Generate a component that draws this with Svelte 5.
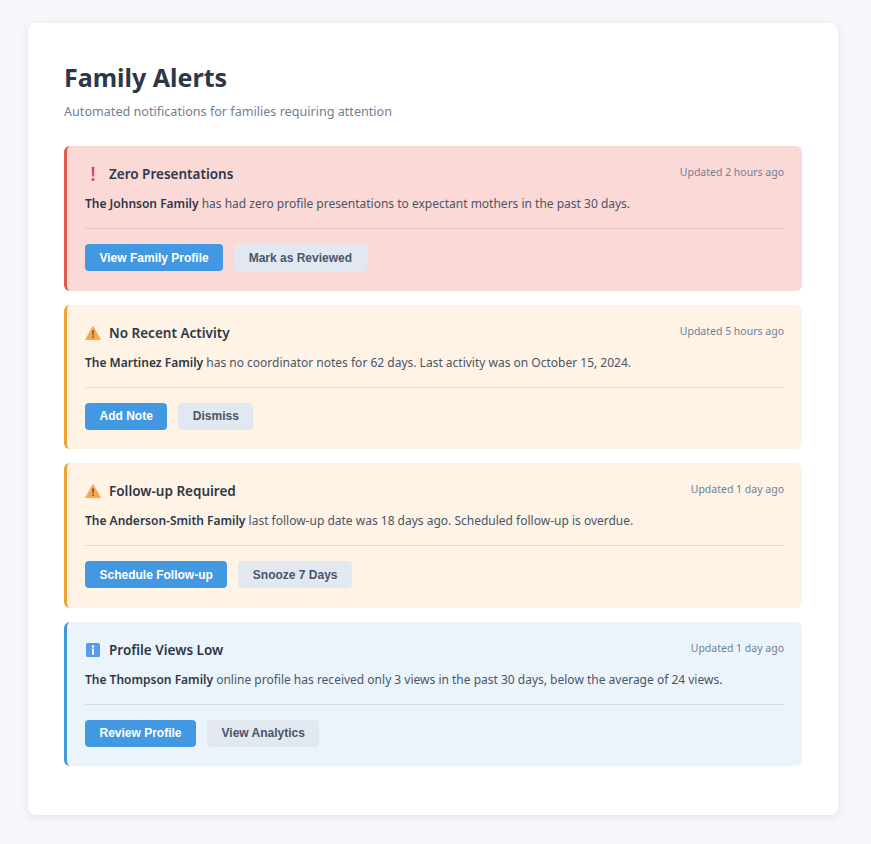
<script>
  const alerts = [
    { kind: 'critical', icon: 'bang', title: 'Zero Presentations', time: 'Updated 2 hours ago', family: 'The Johnson Family', text: ' has had zero profile presentations to expectant mothers in the past 30 days.', primary: 'View Family Profile', secondary: 'Mark as Reviewed' },
    { kind: 'warning', icon: 'warn', title: 'No Recent Activity', time: 'Updated 5 hours ago', family: 'The Martinez Family', text: ' has no coordinator notes for 62 days. Last activity was on October 15, 2024.', primary: 'Add Note', secondary: 'Dismiss' },
    { kind: 'warning', icon: 'warn', title: 'Follow-up Required', time: 'Updated 1 day ago', family: 'The Anderson-Smith Family', text: ' last follow-up date was 18 days ago. Scheduled follow-up is overdue.', primary: 'Schedule Follow-up', secondary: 'Snooze 7 Days' },
    { kind: 'info', icon: 'info', title: 'Profile Views Low', time: 'Updated 1 day ago', family: 'The Thompson Family', text: ' online profile has received only 3 views in the past 30 days, below the average of 24 views.', primary: 'Review Profile', secondary: 'View Analytics' }
  ];
</script>

<div class="page">
  <main class="card">
    <h1>Family Alerts</h1>
    <p class="sub">Automated notifications for families requiring attention</p>

    <div class="list">
      {#each alerts as a}
        <section class="alert {a.kind}">
          <div class="head">
            <div class="title">
              <svg class="icon" viewBox="0 0 16 16" width="16" height="16">
                {#if a.icon === 'bang'}
                  <path d="M6.7 1h2.6L8.8 10.6H7.2z" fill="#e8384f" />
                  <circle cx="8" cy="13.4" r="1.5" fill="#e8384f" />
                {:else if a.icon === 'warn'}
                  <path d="M8 1.6 15.4 14.6H.6z" fill="#f6a94e" stroke="#f6a94e" stroke-width="1" stroke-linejoin="round" />
                  <path d="M7.3 5.6h1.4l-.25 5H7.55z" fill="#4b3a2a" />
                  <circle cx="8" cy="12.3" r=".8" fill="#4b3a2a" />
                {:else}
                  <rect x="1" y="1" width="14" height="14" rx="1.5" fill="#5a9bea" />
                  <rect x="7" y="6.6" width="2" height="6" fill="#fff" />
                  <circle cx="8" cy="4.5" r="1.2" fill="#fff" />
                {/if}
              </svg>
              <h2>{a.title}</h2>
            </div>
            <span class="time">{a.time}</span>
          </div>
          <p class="body"><strong>{a.family}</strong>{a.text}</p>
          <div class="actions">
            <button class="primary">{a.primary}</button>
            <button class="secondary">{a.secondary}</button>
          </div>
        </section>
      {/each}
    </div>
  </main>
</div>

<style>
  :global(body) {
    margin: 0;
    background: #f5f7fa;
    font-family: "Noto Sans", "Open Sans", sans-serif;
    color: #2d3748;
  }
  .page { padding: 23px 33px 29px 28px; }
  .card {
    background: #fff;
    border-radius: 8px;
    box-shadow: 0 2px 10px rgba(0, 0, 0, 0.08);
    padding: 36px 36px 50px;
    height: 792px;
    box-sizing: border-box;
  }
  h1 {
    margin: 0;
    font-size: 25px;
    line-height: 36px;
    font-weight: 700;
    color: #2d3748;
  }
  .sub {
    margin: 7px 0 0;
    font-size: 12.6px;
    line-height: 20px;
    color: #718096;
  }
  .list {
    margin-top: 24px;
    display: flex;
    flex-direction: column;
    gap: 14px;
  }
  .alert {
    border-left: 3px solid;
    border-radius: 6px;
    padding: 18px 18px 18px 18px;
    height: 144.5px;
    box-sizing: border-box;
  }
  .critical { background: #fbd9d7; border-color: #e05a4f; }
  .warning { background: #fef3e4; border-color: #eda232; }
  .info { background: #ebf4fb; border-color: #4299d6; }
  .head {
    display: flex;
    justify-content: space-between;
    align-items: flex-start;
  }
  .title { display: flex; align-items: center; gap: 8px; }
  .icon { flex: none; }
  h2 {
    margin: 0;
    font-size: 13.5px;
    line-height: 20px;
    font-weight: 600;
    color: #2d3748;
  }
  .time {
    font-size: 10.5px;
    line-height: 16px;
    color: #718096;
  }
  .body {
    margin: 10px 0 0;
    font-size: 12px;
    line-height: 20px;
    color: #4a5568;
  }
  .body strong { font-weight: 600; color: #2d3748; }
  .actions {
    display: flex;
    gap: 11px;
    margin-top: 14px;
    padding-top: 15px;
    border-top: 1px solid rgba(0, 0, 0, 0.1);
  }
  button {
    border: 0;
    border-radius: 4px;
    height: 27px;
    padding: 0 14.5px;
    font-family: "Liberation Sans", Arial, sans-serif;
    font-size: 12px;
    font-weight: 700;
  }
  .primary { background: #4299e1; color: #fff; }
  .secondary { background: #e2e8f0; color: #4a5568; }
</style>
